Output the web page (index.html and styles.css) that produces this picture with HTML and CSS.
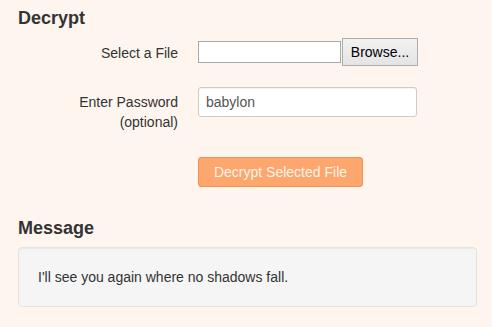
FILE: index.html
```html
<!DOCTYPE html>
<html lang="en">
<head>
  <meta charset="UTF-8">
  <title>Decrypt</title>
  <link rel="stylesheet" href="styles.css">
</head>
<body>
  <h2 class="title">Decrypt</h2>
  <div class="row row-file">
    <label class="label">Select a File</label>
    <div class="file">
      <span class="file-name"></span>
      <span class="file-btn">Browse...</span>
    </div>
  </div>
  <div class="row row-pass">
    <label class="label">Enter Password<br>(optional)</label>
    <input class="field" type="text" value="babylon">
  </div>
  <button class="go">Decrypt Selected File</button>

  <h2 class="title title-msg">Message</h2>
  <div class="well">I'll see you again where no shadows fall.</div>
</body>
</html>
```

FILE: styles.css
```css
body {
  margin: 0;
  padding: 8px 15px 0 18px;
  background: #fef5ef;
  font-family: "Liberation Sans", Arial, sans-serif;
  font-size: 14px;
  line-height: 20px;
  color: #333;
}
.title {
  margin: 0;
  font-size: 18px;
  line-height: 20px;
  font-weight: bold;
}
.row {
  display: flex;
  align-items: flex-start;
}
.label {
  width: 160px;
  margin-right: 20px;
  text-align: right;
}
.row-file {
  margin-top: 10px;
  align-items: center;
}
.row-file .label {
  padding-top: 1px;
}
.file {
  display: flex;
  align-items: center;
}
.file-name {
  display: block;
  width: 141px;
  height: 20px;
  background: #fff;
  border: 1px solid #a9a9a9;
}
.file-btn {
  display: block;
  margin-left: 1px;
  width: 74px;
  height: 26px;
  line-height: 26px;
  text-align: center;
  color: #000;
  background: linear-gradient(#f2f2f2, #e4e4e4);
  border: 1px solid #adadad;
  box-sizing: border-box;
  width: 76px;
  height: 28px;
}
.row-pass {
  margin-top: 21px;
}
.row-pass .label {
  padding-top: 5px;
}
.field {
  width: 219px;
  height: 30px;
  box-sizing: border-box;
  padding: 0 7px;
  border: 1px solid #ccc;
  border-radius: 3px;
  background: #fff;
  font-family: inherit;
  font-size: 14px;
  color: #555;
  box-shadow: inset 0 1px 1px rgba(0,0,0,0.05);
}
.go {
  display: block;
  margin: 25px 0 0 180px;
  width: 165px;
  height: 30px;
  padding: 0;
  background: #fda66d;
  border: 1px solid #e9935b;
  border-radius: 3px;
  color: #fff3ea;
  font-family: inherit;
  font-size: 14px;
}
.title-msg {
  margin-top: 31px;
}
.well {
  margin-top: 9px;
  padding: 19px 19px;
  background: #f5f5f5;
  border: 1px solid #e3e3e3;
  border-radius: 4px;
  box-shadow: inset 0 1px 1px rgba(0,0,0,0.05);
}
```
